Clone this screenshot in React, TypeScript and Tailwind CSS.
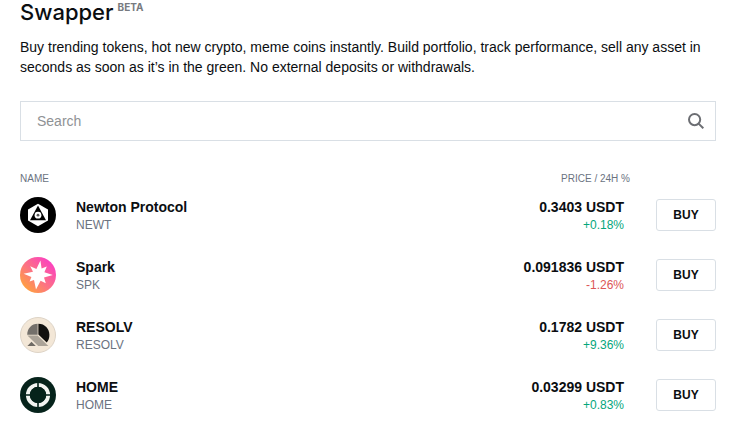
import { useState } from 'react';
import type { ReactNode } from 'react';

interface Token {
  name: string;
  symbol: string;
  price: string;
  change: number;
  logo: ReactNode;
}

function NewtonLogo() {
  return (
    <svg viewBox="0 0 36 36" className="w-9 h-9" aria-hidden="true">
      <circle cx="18" cy="18" r="18" fill="#000" />
      <path d="M18 6.8 28 12.4V23.6L18 29.2 8 23.6V12.4Z" fill="#fff" />
      <path d="M18 8.6 26 23.2H10Z" fill="#000" />
      <circle cx="18" cy="18.2" r="3.4" fill="#fff" />
      <circle cx="18" cy="18.2" r="1.4" fill="#555" />
    </svg>
  );
}

function SparkLogo() {
  return (
    <svg viewBox="0 0 36 36" className="w-9 h-9" aria-hidden="true">
      <defs>
        <linearGradient id="spark" x1="0.1" y1="0.9" x2="0.85" y2="0.15">
          <stop offset="0" stopColor="#ffa43a" />
          <stop offset="0.5" stopColor="#fc7284" />
          <stop offset="1" stopColor="#fb43bd" />
        </linearGradient>
      </defs>
      <circle cx="18" cy="18" r="18" fill="url(#spark)" />
      <path
        d="M20.4 3.6 21.6 11.6 26.8 9.4 24.4 15.2 32.8 18 24 20.6 25.8 26.2 20.6 23.8 16 32.4 14 23 9.6 24.6 11.4 20 3.6 16.8 13 14.8 10.2 9.2 16.4 12Z"
        fill="#fff"
      />
    </svg>
  );
}

function ResolvLogo() {
  return (
    <svg viewBox="0 0 36 36" className="w-9 h-9" aria-hidden="true">
      <circle cx="18" cy="18" r="17.5" fill="#f3e7d7" stroke="#ddd3c6" />
      <path d="M17.6 6.8V17.7H7.2C7.2 11.5 11.6 6.8 17.6 6.8Z" fill="#74706b" />
      <path d="M18.4 6.8C24.8 6.8 29.4 11.7 29.4 18C29.4 21 28.4 23.6 26.7 25.5L18.4 17.6Z" fill="#12110f" />
      <path d="M7.4 18.5H17.6L28.4 29H18.2Z" fill="#aba398" />
      <path d="M7.4 29 11.5 24.7 15.8 29Z" fill="#6f6a64" />
    </svg>
  );
}

function HomeLogo() {
  return (
    <svg viewBox="0 0 36 36" className="w-9 h-9" aria-hidden="true">
      <circle cx="18" cy="18" r="18" fill="#06231b" />
      <circle cx="18" cy="18" r="10.2" fill="none" stroke="#f2f4f1" strokeWidth="3.8" />
      <path d="M18 5V31M5 18H31" stroke="#06231b" strokeWidth="1.6" />
      <circle cx="18" cy="18" r="8" fill="#06231b" />
    </svg>
  );
}

const TOKENS: Token[] = [
  { name: 'Newton Protocol', symbol: 'NEWT', price: '0.3403', change: 0.18, logo: <NewtonLogo /> },
  { name: 'Spark', symbol: 'SPK', price: '0.091836', change: -1.26, logo: <SparkLogo /> },
  { name: 'RESOLV', symbol: 'RESOLV', price: '0.1782', change: 9.36, logo: <ResolvLogo /> },
  { name: 'HOME', symbol: 'HOME', price: '0.03299', change: 0.83, logo: <HomeLogo /> },
];

function TokenRow({ token }: { token: Token }) {
  const up = token.change >= 0;

  return (
    <tr className="h-15">
      <td className="p-0">
        <div className="flex items-center gap-5">
          {token.logo}
          <div>
            <div className="text-sm leading-5 font-bold">{token.name}</div>
            <div className="text-xs leading-4 text-[#6b737f]">{token.symbol}</div>
          </div>
        </div>
      </td>
      <td className="p-0 pr-1.5 text-right">
        <div className="text-sm leading-5 font-bold">{token.price} USDT</div>
        <div className={`text-xs leading-4 ${up ? 'text-[#05a67c]' : 'text-[#dc5656]'}`}>
          {up ? '+' : ''}
          {token.change.toFixed(2)}%
        </div>
      </td>
      <td className="w-[86px] p-0 text-right">
        <button
          type="button"
          aria-label={`Buy ${token.name}`}
          className="w-15 h-8 rounded-[3px] border border-[#d9dfe5] text-xs font-bold hover:bg-gray-50"
        >
          BUY
        </button>
      </td>
    </tr>
  );
}

export default function App() {
  const [query, setQuery] = useState('');

  const q = query.trim().toLowerCase();
  const visible = TOKENS.filter((t) => `${t.name} ${t.symbol}`.toLowerCase().includes(q));

  return (
    <main className="min-h-screen bg-white pl-5 pr-[38px] font-['Liberation_Sans',Arial,sans-serif] text-[#0b0e11]">
      {/* Title */}
      <header className="flex items-start gap-1 font-[Inter,sans-serif]">
        <h1 className="text-[22px] leading-6 font-medium">Swapper</h1>
        <span className="pt-px text-[10px] leading-3 font-bold text-[#777a80]">BETA</span>
      </header>
      <p className="mt-[13px] text-sm leading-5">
        Buy trending tokens, hot new crypto, meme coins instantly. Build portfolio, track performance, sell any asset in
        seconds as soon as it’s in the green. No external deposits or withdrawals.
      </p>

      {/* Search */}
      <label className="mt-6 flex h-10 items-center border border-[#d9dfe5] pl-4 pr-[11px]">
        <input
          type="text"
          aria-label="Search"
          placeholder="Search"
          value={query}
          onChange={(e) => setQuery(e.target.value)}
          className="min-w-0 flex-1 text-sm outline-none placeholder:text-[#8f9295]"
        />
        <svg viewBox="0 0 16 16" className="w-4 h-4" fill="none" stroke="#6c6e73" strokeWidth="2" aria-hidden="true">
          <circle cx="6.6" cy="6.6" r="5.6" />
          <path d="M10.6 10.6 15.3 15.3" />
        </svg>
      </label>

      {/* Token list */}
      <table className="mt-8 w-full border-collapse">
        <thead>
          <tr className="text-[10px] leading-3 text-[#6b737f]">
            <th scope="col" className="p-0 text-left font-normal">NAME</th>
            <th scope="col" className="p-0 text-right font-normal">PRICE / 24H %</th>
            <th className="p-0" />
          </tr>
        </thead>
        <tbody>
          {visible.map((t) => (
            <TokenRow key={t.symbol} token={t} />
          ))}
        </tbody>
      </table>
    </main>
  );
}
